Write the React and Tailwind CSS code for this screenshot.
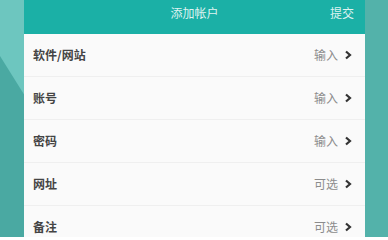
import React from 'react';

const rows = [
    {label: '软件/网站', hint: '输入'},
    {label: '账号', hint: '输入'},
    {label: '密码', hint: '输入'},
    {label: '网址', hint: '可选'},
    {label: '备注', hint: '可选'},
];

function Chevron() {
    return (
        <svg width="8" height="10" viewBox="0 0 8 10" className="shrink-0">
            <polyline points="2,1.5 6,5 2,8.5" fill="none" stroke="#333" strokeWidth="2.2"/>
        </svg>
    );
}

function Row({label, hint}) {
    return (
        <div className="h-[43px] flex items-center justify-between pl-[9px] pr-[13px] border-b border-[#efefef] shrink-0">
            <span className="text-[12px] font-bold text-[#444] leading-none">{label}</span>
            <div className="flex items-center gap-[6px]">
                <span className="text-[12px] text-[#8c8c8c] leading-none">{hint}</span>
                <Chevron/>
            </div>
        </div>
    );
}

export default function App() {
    return (
        <div className="relative w-[388px] h-[237px] overflow-hidden bg-[#53b2aa] font-['Noto_Sans_CJK_SC',sans-serif]">
            {/* background wedge */}
            <svg className="absolute left-0 top-0" width="40" height="237" viewBox="0 0 40 237">
                <rect width="40" height="237" fill="#4aa9a2"/>
                <polygon points="0,0 40,0 40,120 0,56" fill="#6dc6bf"/>
            </svg>
            <div className="relative ml-[24px] w-[341px] h-full flex flex-col bg-[#fafafa]">
                <div className="h-[34px] shrink-0 bg-[#1bb0a6] grid grid-cols-[1fr_auto_1fr] items-start pt-[4px] text-[12px] text-[#dff3f1]">
                    <div/>
                    <span>添加帐户</span>
                    <span className="justify-self-end pr-[11px]">提交</span>
                </div>
                {rows.map((r) => (
                    <Row key={r.label} {...r}/>
                ))}
            </div>
        </div>
    );
}
